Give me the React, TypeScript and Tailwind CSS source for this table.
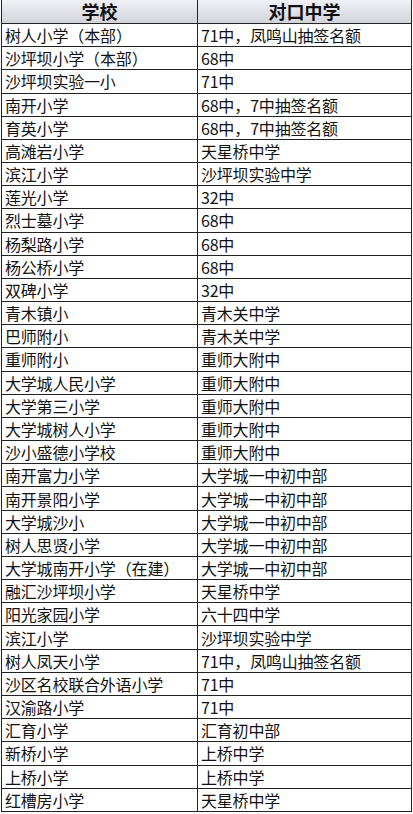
const rows: [string, string][] = [
  ["树人小学（本部）", "71中，凤鸣山抽签名额"],
  ["沙坪坝小学（本部）", "68中"],
  ["沙坪坝实验一小", "71中"],
  ["南开小学", "68中，7中抽签名额"],
  ["育英小学", "68中，7中抽签名额"],
  ["高滩岩小学", "天星桥中学"],
  ["滨江小学", "沙坪坝实验中学"],
  ["莲光小学", "32中"],
  ["烈士墓小学", "68中"],
  ["杨梨路小学", "68中"],
  ["杨公桥小学", "68中"],
  ["双碑小学", "32中"],
  ["青木镇小", "青木关中学"],
  ["巴师附小", "青木关中学"],
  ["重师附小", "重师大附中"],
  ["大学城人民小学", "重师大附中"],
  ["大学第三小学", "重师大附中"],
  ["大学城树人小学", "重师大附中"],
  ["沙小盛德小学校", "重师大附中"],
  ["南开富力小学", "大学城一中初中部"],
  ["南开景阳小学", "大学城一中初中部"],
  ["大学城沙小", "大学城一中初中部"],
  ["树人思贤小学", "大学城一中初中部"],
  ["大学城南开小学（在建）", "大学城一中初中部"],
  ["融汇沙坪坝小学", "天星桥中学"],
  ["阳光家园小学", "六十四中学"],
  ["滨江小学", "沙坪坝实验中学"],
  ["树人凤天小学", "71中，凤鸣山抽签名额"],
  ["沙区名校联合外语小学", "71中"],
  ["汉渝路小学", "71中"],
  ["汇育小学", "汇育初中部"],
  ["新桥小学", "上桥中学"],
  ["上桥小学", "上桥中学"],
  ["红槽房小学", "天星桥中学"],
];

// full-width punctuation gets a fixed 1em slot so it isn't trimmed
function Text({ value }: { value: string }) {
  const parts = value.split(/([，（）])/).filter(Boolean);
  return (
    <>
      {parts.map((p, i) =>
        /^[，（）]$/.test(p) ? (
          <span key={i} className="inline-block w-[16px] text-center">
            {p}
          </span>
        ) : (
          <span key={i}>{p}</span>
        )
      )}
    </>
  );
}

export default function App() {
  return (
    <div
      className="w-[413px] h-[814px] bg-white overflow-hidden text-[#111] pl-[1px]"
      style={{ fontFamily: '"Noto Sans CJK SC", "Noto Sans", sans-serif' }}
    >
      <div className="grid grid-cols-[196px_214px] border-l border-[#222]">
        <div className="h-[24px] border-r border-b border-[#222] bg-gradient-to-b from-[#eff1f6] to-[#d2d4da] text-center text-[18px] font-bold leading-[23px]">
          学校
        </div>
        <div className="h-[24px] border-r border-b border-[#222] bg-gradient-to-b from-[#eff1f6] to-[#d2d4da] text-center text-[18px] font-bold leading-[23px]">
          对口中学
        </div>
        {rows.map(([school, middle], i) => (
          <div key={i} className="contents">
            <div className="h-[23.18px] flex items-center pl-[3px] border-r border-b border-[#222] text-[16px] leading-none whitespace-nowrap tracking-[-0.2px]">
              <Text value={school} />
            </div>
            <div className="h-[23.18px] flex items-center pl-[3px] border-r border-b border-[#222] text-[16px] leading-none whitespace-nowrap tracking-[-0.2px]">
              <Text value={middle} />
            </div>
          </div>
        ))}
      </div>
    </div>
  );
}
